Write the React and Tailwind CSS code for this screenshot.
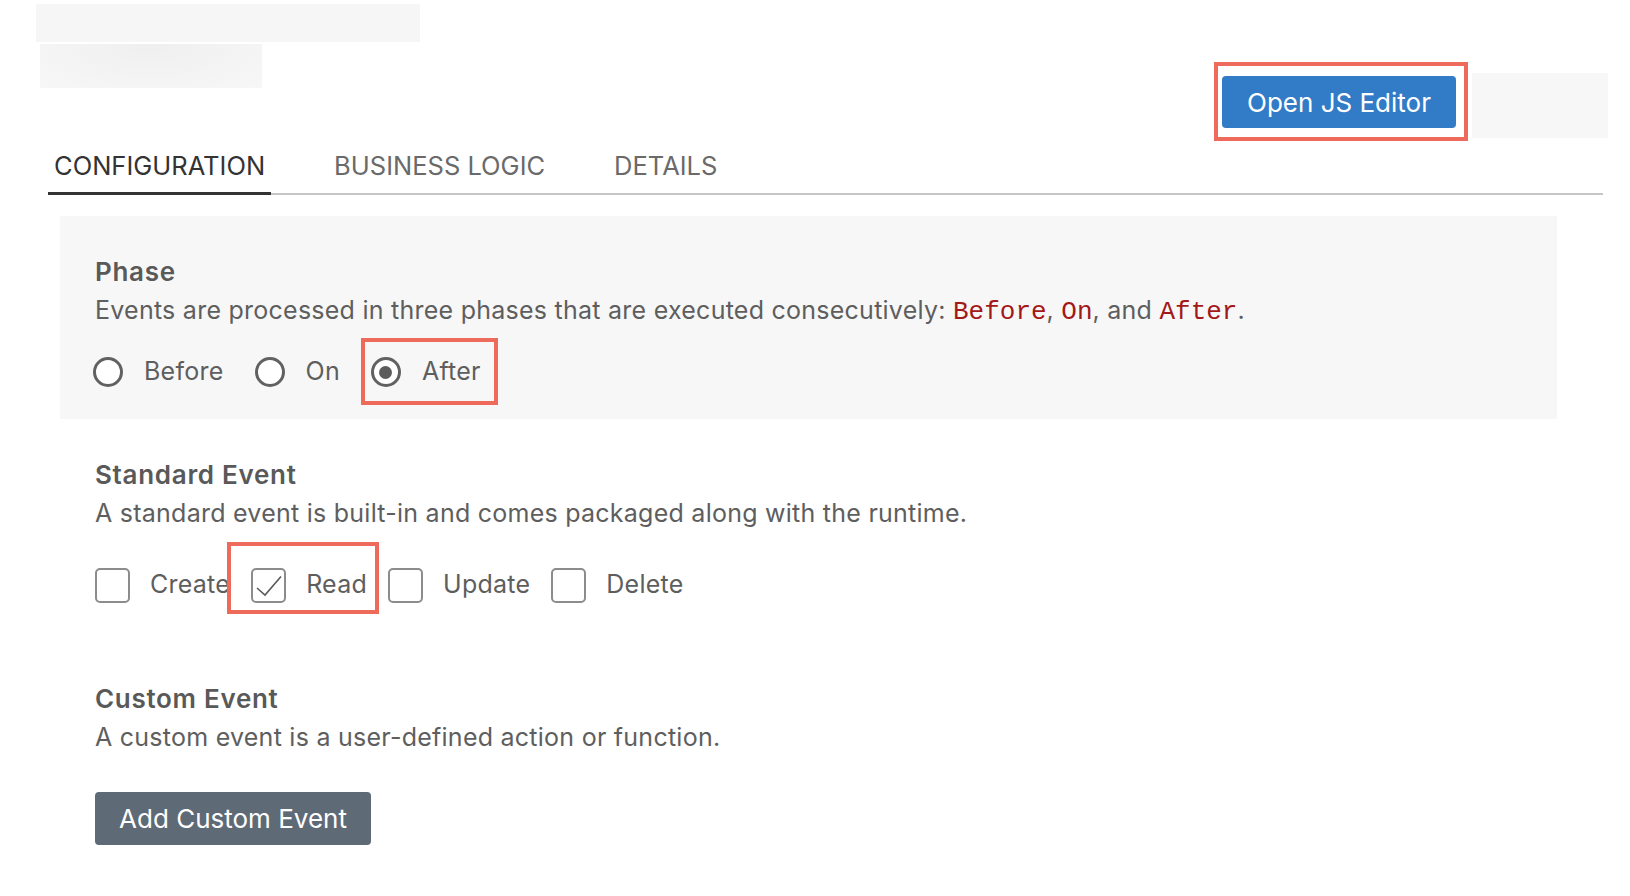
import React from "react";

const tabs = ["CONFIGURATION", "BUSINESS LOGIC", "DETAILS"];

function Radio({ label, checked, highlight }) {
  return (
    <div className="relative flex items-center gap-[21px] h-[40px]">
      <span className="w-[30px] h-[30px] rounded-full border-[3px] border-[#616161] bg-white flex items-center justify-center">
        {checked && <span className="w-[13px] h-[13px] rounded-full bg-[#5c5c5c]" />}
      </span>
      <span>{label}</span>
      {/* красная рамка-аннотация */}
      {highlight && (
        <span className="absolute left-[-10px] top-[-14px] w-[137px] h-[67px] border-4 border-[#ee6a5a]" />
      )}
    </div>
  );
}

function Check({ label, checked, highlight }) {
  return (
    <div className="relative flex items-center gap-[20px] h-[40px]">
      <span className="w-[35px] h-[35px] rounded-[5px] border-2 border-[#8c8c8c] bg-white flex items-center justify-center">
        {checked && (
          <svg width="35" height="35" viewBox="0 0 35 35" className="-m-[2px]">
            <polyline points="6,20 14,27 30,8.5" fill="none" stroke="#5a5a5a" strokeWidth="1.6" />
          </svg>
        )}
      </span>
      <span>{label}</span>
      {highlight && (
        <span className="absolute left-[-24px] top-[-23px] w-[152px] h-[72px] border-4 border-[#ee6a5a]" />
      )}
    </div>
  );
}

function Mono({ children }) {
  return (
    <code className="text-[#a31818] text-[26px] tracking-normal" style={{ fontFamily: '"Liberation Mono", monospace' }}>
      {children}
    </code>
  );
}

export default function App() {
  return (
    <div
      className="w-[1630px] h-[896px] bg-white text-[#5e5e5e] overflow-hidden"
      style={{ fontFamily: "Inter, 'Noto Sans', sans-serif" }}
    >
      {/* шапка: заглушки слева, кнопка справа */}
      <div className="flex items-start h-[141px]">
        <div className="pl-[36px] pt-[4px]">
          <div className="w-[384px] h-[38px] bg-[#f6f6f6]" />
          <div className="ml-[4px] mt-[2px] w-[222px] h-[44px] bg-[radial-gradient(ellipse_at_top,#efefef,#f7f7f7)]" />
        </div>
        <div className="ml-auto mr-[22px] mt-[62px] flex items-start gap-[4px]">
          <div className="border-4 border-[#ee6a5a] pl-[4px] pr-[8px] pt-[10px] pb-[9px]">
            <button className="w-[234px] h-[52px] rounded-[4px] bg-[#317bc7] text-white text-[26px]">
              Open JS Editor
            </button>
          </div>
          <div className="mt-[11px] w-[136px] h-[65px] bg-[#f7f7f7]" />
        </div>
      </div>

      {/* вкладки */}
      <div className="ml-[48px] w-[1555px] border-b-2 border-[#c6c6c6] flex gap-[57px]">
        {tabs.map((t, i) => (
          <div
            key={t}
            className={
              i === 0
                ? "pt-[11px] pb-[10px] px-[6px] leading-[28px] text-[25.5px] text-[#333] border-b-[3px] border-[#333] -mb-[2px]"
                : "pt-[11px] pb-[13px] px-[6px] leading-[28px] text-[25.5px] text-[#6a6a6a]"
            }
          >
            {t}
          </div>
        ))}
      </div>

      {/* Phase */}
      <div className="ml-[60px] mt-[21px] w-[1497px] bg-[#f7f7f7] pl-[35px] pt-[37px] pb-[27px]">
        <h2 className="text-[26px] tracking-[0.7px] font-semibold leading-[38px] text-[#595959]">Phase</h2>
        <p className="mt-[1px] text-[25px] tracking-[0.25px] leading-[36px]">
          Events are processed in three phases that are executed consecutively: <Mono>Before</Mono>,{" "}
          <Mono>On</Mono>, and <Mono>After</Mono>.
        </p>
        <div className="mt-[22px] flex items-center gap-[31px] text-[25px] tracking-[0.25px] -ml-[2px]">
          <Radio label="Before" />
          <Radio label="On" />
          <Radio label="After" checked highlight />
        </div>
      </div>

      <div className="pl-[95px]">
        {/* Standard Event */}
        <h2 className="mt-[37px] text-[26px] tracking-[0.7px] font-semibold leading-[38px] text-[#595959]">
          Standard Event
        </h2>
        <p className="mt-[1px] text-[25px] tracking-[0.25px] leading-[36px]">
          A standard event is built-in and comes packaged along with the runtime.
        </p>
        <div className="mt-[34px] flex items-center gap-[21px] text-[25px] tracking-[0.25px]">
          <Check label="Create" />
          <Check label="Read" checked highlight />
          <Check label="Update" />
          <Check label="Delete" />
        </div>

        {/* Custom Event */}
        <h2 className="mt-[75px] text-[26px] tracking-[0.7px] font-semibold leading-[38px] text-[#595959]">
          Custom Event
        </h2>
        <p className="mt-[1px] text-[25px] tracking-[0.25px] leading-[36px]">
          A custom event is a user-defined action or function.
        </p>
        <button className="mt-[37px] w-[276px] h-[53px] rounded-[4px] bg-[#5f6a77] text-white text-[26px]">
          Add Custom Event
        </button>
      </div>
    </div>
  );
}
